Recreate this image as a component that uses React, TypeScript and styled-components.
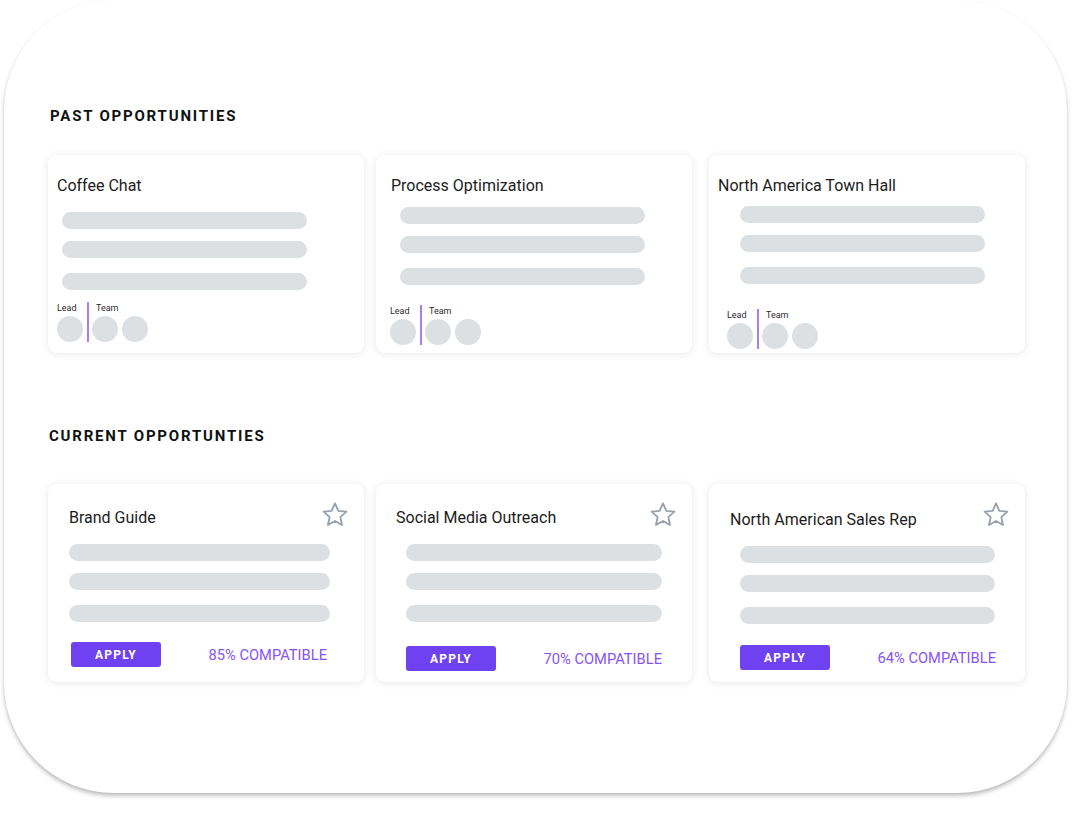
import React from "react";
import styled, { createGlobalStyle } from "styled-components";

const GlobalStyle = createGlobalStyle`
  html, body { margin: 0; padding: 0; background: #ffffff; }
  body {
    font-family: Roboto, "Liberation Sans", Arial, sans-serif;
    -webkit-font-smoothing: antialiased;
  }
  * { box-sizing: border-box; }
`;

const Page = styled.div`
  width: 1074px;
  height: 818px;
  overflow: hidden;
  padding: 0 7px 0 4px;
`;

const Frame = styled.main`
  height: 793px;
  border-radius: 110px;
  background: #ffffff;
  box-shadow: 0 3px 4px rgba(0, 0, 0, 0.24), 0 1px 2px rgba(0, 0, 0, 0.05);
  padding: 107px 0 0 46px;
`;

const SectionTitle = styled.h2<{ $top?: number }>`
  margin: ${(p) => p.$top ?? 0}px 0 0 ${(p) => (p.$top ? -1 : 0)}px;
  font-size: 15px;
  line-height: 18px;
  font-weight: 700;
  letter-spacing: 1.8px;
  color: #111111;
`;

const CardRow = styled.section<{ $top: number }>`
  display: grid;
  grid-template-columns: 328px 333px 316px;
  margin: ${(p) => p.$top}px 0 0 -2px;
`;

const Card = styled.article<{ $padTop: number }>`
  width: 316px;
  height: 198px;
  background: #ffffff;
  border-radius: 8px;
  box-shadow: 0 1px 8px rgba(0, 0, 0, 0.09), 0 0 1px rgba(0, 0, 0, 0.06);
  padding-top: ${(p) => p.$padTop}px;
  display: flex;
  flex-direction: column;
`;

const CardTitle = styled.h3<{ $x?: number; $top?: number }>`
  margin: ${(p) => p.$top ?? 0}px 0 0 ${(p) => p.$x ?? 0}px;
  font-size: 16px;
  line-height: 19px;
  font-weight: 400;
  color: #1c1c1c;
  white-space: nowrap;
`;

const Bars = styled.div<{ $x: number; $top: number; $w: number }>`
  display: flex;
  flex-direction: column;
  width: ${(p) => p.$w}px;
  margin: ${(p) => p.$top}px 0 0 ${(p) => p.$x}px;
  & > :nth-child(2) { margin-top: 12px; }
  & > :nth-child(3) { margin-top: 15px; }
`;

const Bar = styled.div`
  height: 17px;
  border-radius: 9px;
  background: #dde0e3;
`;

const TeamFooter = styled.div<{ $x: number; $top: number }>`
  display: flex;
  margin: ${(p) => p.$top}px 0 0 ${(p) => p.$x}px;
`;

const Group = styled.div`
  display: flex;
  flex-direction: column;
`;

const GroupLabel = styled.span<{ $indent?: number }>`
  font-size: 9px;
  line-height: 12px;
  color: #2a2a2a;
  padding-left: ${(p) => p.$indent ?? 0}px;
`;

const Avatars = styled.div`
  display: flex;
  gap: 4px;
  margin-top: 2px;
`;

const Avatar = styled.div`
  width: 26px;
  height: 26px;
  border-radius: 50%;
  background: #dde0e3;
`;

const Divider = styled.div`
  width: 2px;
  align-self: stretch;
  background: #a97cf8;
  margin: 0 3px 0 4px;
`;

const CardHeader = styled.div<{ $x: number }>`
  display: flex;
  justify-content: space-between;
  align-items: flex-start;
  padding: 0 16px 0 ${(p) => p.$x}px;
`;

const StarIcon = styled.svg`
  width: 26px;
  height: 25px;
  flex: none;
  fill: none;
  stroke: #97a1ac;
  stroke-width: 1.7;
  stroke-linejoin: round;
`;

const ActionFooter = styled.div<{ $x: number; $top: number }>`
  display: flex;
  align-items: center;
  justify-content: space-between;
  width: 256px;
  margin: ${(p) => p.$top}px 0 0 ${(p) => p.$x}px;
`;

const ApplyButton = styled.button`
  width: 90px;
  height: 25px;
  border: 0;
  border-radius: 3px;
  background: #6e41f1;
  color: #ffffff;
  font-family: Roboto, "Liberation Sans", Arial, sans-serif;
  font-size: 12px;
  font-weight: 700;
  letter-spacing: 1.2px;
  padding: 0;
  cursor: pointer;
`;

const Compat = styled.span`
  font-size: 14.7px;
  line-height: 18px;
  color: #8753f6;
  white-space: nowrap;
`;

const Star = () => (
  <StarIcon viewBox="0 0 24 23" aria-hidden>
    <polygon points="12,1.3 15.06,8.09 22.46,8.9 16.95,13.91 18.47,21.2 12,17.5 5.53,21.2 7.05,13.91 1.54,8.9 8.94,8.09" />
  </StarIcon>
);

type Past = {
  title: string;
  titleX: number;
  barsX: number;
  barsTop: number;
  footX: number;
  footTop: number;
};

const past: Past[] = [
  { title: "Coffee Chat", titleX: 9, barsX: 14, barsTop: 17, footX: 9, footTop: 12 },
  { title: "Process Optimization", titleX: 15, barsX: 24, barsTop: 12, footX: 14, footTop: 20 },
  { title: "North America Town Hall", titleX: 9, barsX: 31, barsTop: 11, footX: 18, footTop: 25 },
];

type Current = {
  title: string;
  titleX: number;
  titleTop: number;
  barsX: number;
  barsW: number;
  footX: number;
  footTop: number;
  compat: string;
};

const current: Current[] = [
  { title: "Brand Guide", titleX: 21, titleTop: 6, barsX: 21, barsW: 261, footX: 23, footTop: 20, compat: "85% COMPATIBLE" },
  { title: "Social Media Outreach", titleX: 20, titleTop: 6, barsX: 30, barsW: 256, footX: 30, footTop: 24, compat: "70% COMPATIBLE" },
  { title: "North American Sales Rep", titleX: 21, titleTop: 8, barsX: 31, barsW: 255, footX: 31, footTop: 21, compat: "64% COMPATIBLE" },
];

const SkeletonBars = ({ x, top, w }: { x: number; top: number; w: number }) => (
  <Bars $x={x} $top={top} $w={w}>
    <Bar />
    <Bar />
    <Bar />
  </Bars>
);

export default function App() {
  return (
    <>
      <GlobalStyle />
      <Page>
        <Frame>
          <SectionTitle>PAST OPPORTUNITIES</SectionTitle>
          <CardRow $top={30}>
            {past.map((c) => (
              <Card key={c.title} $padTop={21}>
                <CardTitle $x={c.titleX}>{c.title}</CardTitle>
                <SkeletonBars x={c.barsX} top={c.barsTop} w={245} />
                <TeamFooter $x={c.footX} $top={c.footTop}>
                  <Group>
                    <GroupLabel>Lead</GroupLabel>
                    <Avatars>
                      <Avatar />
                    </Avatars>
                  </Group>
                  <Divider />
                  <Group>
                    <GroupLabel $indent={4}>Team</GroupLabel>
                    <Avatars>
                      <Avatar />
                      <Avatar />
                    </Avatars>
                  </Group>
                </TeamFooter>
              </Card>
            ))}
          </CardRow>

          <SectionTitle $top={74}>CURRENT OPPORTUNTIES</SectionTitle>
          <CardRow $top={39}>
            {current.map((c) => (
              <Card key={c.title} $padTop={18}>
                <CardHeader $x={c.titleX}>
                  <CardTitle $top={c.titleTop}>{c.title}</CardTitle>
                  <Star />
                </CardHeader>
                <SkeletonBars x={c.barsX} top={17} w={c.barsW} />
                <ActionFooter $x={c.footX} $top={c.footTop}>
                  <ApplyButton>APPLY</ApplyButton>
                  <Compat>{c.compat}</Compat>
                </ActionFooter>
              </Card>
            ))}
          </CardRow>
        </Frame>
      </Page>
    </>
  );
}
